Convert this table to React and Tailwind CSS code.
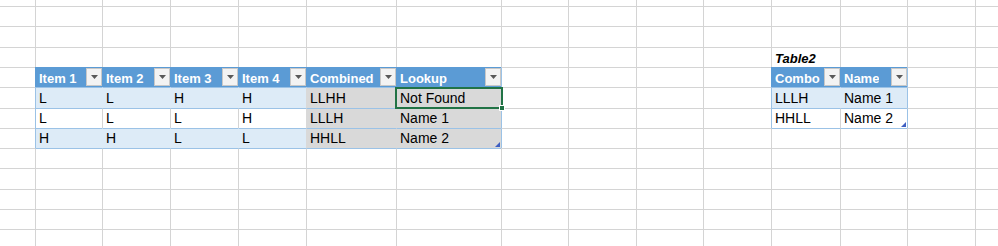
import React from "react";

// sheet geometry (px): column widths incl. left gridline, row heights incl. top gridline
const COLS = 15;
const ROWS = 13;

const t1 = {
  r0: 4,
  r1: 7,
  c0: 1,
  c1: 6,
  grey: [5, 6],
  head: ["Item 1", "Item 2", "Item 3", "Item 4", "Combined", "Lookup"],
  data: [
    ["L", "L", "H", "H", "LLHH", "Not Found"],
    ["L", "L", "L", "H", "LLLH", "Name 1"],
    ["H", "H", "L", "L", "HHLL", "Name 2"],
  ],
};

const t2 = {
  r0: 4,
  r1: 6,
  c0: 11,
  c1: 12,
  grey: [],
  head: ["Combo", "Name"],
  data: [
    ["LLLH", "Name 1"],
    ["HHLL", "Name 2"],
  ],
};

const inTable = (t, r, c) => r >= t.r0 && r <= t.r1 && c >= t.c0 && c <= t.c1;

const DropButton = () => (
  <div className="self-start w-[16px] h-[18px] shrink-0 border border-[#c8c8c8] bg-[#f3f3f3] flex items-center justify-center">
    <svg width="7" height="4" viewBox="0 0 7 4">
      <polygon points="0,0 7,0 3.5,4" fill="#595959" />
    </svg>
  </div>
);

const ResizeMark = () => (
  <svg className="absolute right-[1px] bottom-[1px]" width="5" height="5" viewBox="0 0 5 5">
    <polygon points="5,0 5,5 0,5" fill="#3f5fc2" />
  </svg>
);

function cellInfo(r, c) {
  let left = "border-l-[#d4d4d4]";
  let top = "border-t-[#d4d4d4]";
  let bg = "bg-white";
  let content = null;
  let kind = "plain";

  for (const t of [t1, t2]) {
    if (inTable(t, r, c)) {
      const i = c - t.c0;
      if (r === t.r0) {
        kind = "head";
        bg = "bg-[#5b9bd5]";
        left = "border-l-[#5b9bd5]";
        top = "border-t-[#5b9bd5]";
        content = t.head[i];
      } else {
        const k = r - t.r0 - 1;
        const banded = k % 2 === 0;
        kind = "data";
        top = "border-t-[#9bc2e6]";
        content = t.data[k][i];
        if (t.grey.includes(c)) {
          bg = "bg-[#d9d9d9]";
          left = "border-l-[#d9d9d9]";
        } else if (banded) {
          bg = "bg-[#ddebf7]";
          left = "border-l-[#ddebf7]";
        } else {
          bg = "bg-white";
          left = "border-l-[#d4d4d4]";
        }
        if (c === t.c0) left = "border-l-[#9bc2e6]";
      }
    }
    // table outline on the right and below
    if (c === t.c1 + 1 && r >= t.r0 && r <= t.r1) left = "border-l-[#9bc2e6]";
    if (r === t.r1 + 1 && c >= t.c0 && c <= t.c1) top = "border-t-[#9bc2e6]";
  }

  if (r === 3 && c === 11) {
    kind = "title";
    content = "Table2";
  }

  return { left, top, bg, content, kind };
}

const Cell = ({ r, c }) => {
  const { left, top, bg, content, kind } = cellInfo(r, c);
  const edges = `${c > 0 ? "border-l " + left : ""} ${r > 0 ? "border-t " + top : ""}`;

  return (
    <div className={`relative flex min-w-0 ${bg} ${edges}`}>
      {kind === "head" && (
        <div className="flex w-full justify-between">
          <span className="self-end pl-[3px] pb-[1px] text-[13px] leading-[15px] font-bold text-white whitespace-nowrap overflow-hidden">
            {content}
          </span>
          <DropButton />
        </div>
      )}
      {kind === "data" && (
        <span className="self-end pl-[3px] pb-[2px] text-[14px] leading-[16px] text-black whitespace-nowrap">
          {content}
        </span>
      )}
      {kind === "title" && (
        <span className="self-end pl-[3px] pb-[1px] text-[13px] leading-[15px] font-bold italic text-black whitespace-nowrap">
          {content}
        </span>
      )}

      {/* active cell */}
      {r === 5 && c === 6 && (
        <div className="absolute z-10 left-[-2px] top-[-1px] right-[-2px] bottom-[-1px] border-2 border-[#217346]">
          <div className="absolute right-[-4px] bottom-[-4px] w-[6px] h-[6px] bg-[#217346] border border-white" />
        </div>
      )}
      {r === 7 && c === 6 && <ResizeMark />}
      {r === 6 && c === 12 && <ResizeMark />}
    </div>
  );
};

export default function App() {
  const cells = [];
  for (let r = 0; r < ROWS; r++) {
    for (let c = 0; c < COLS; c++) {
      cells.push(<Cell key={`${r}-${c}`} r={r} c={c} />);
    }
  }

  return (
    <div className="w-[998px] h-[246px] overflow-hidden bg-white font-['Liberation_Sans',Arial,sans-serif]">
      <div className="grid grid-cols-[35px_67px_68px_68px_68px_90px_105px_67px_68px_67px_68px_69px_67px_68px_23px] grid-rows-[6px_20px_21px_20px_20px_21px_20px_20px_20px_21px_20px_20px_17px]">
        {cells}
      </div>
    </div>
  );
}
